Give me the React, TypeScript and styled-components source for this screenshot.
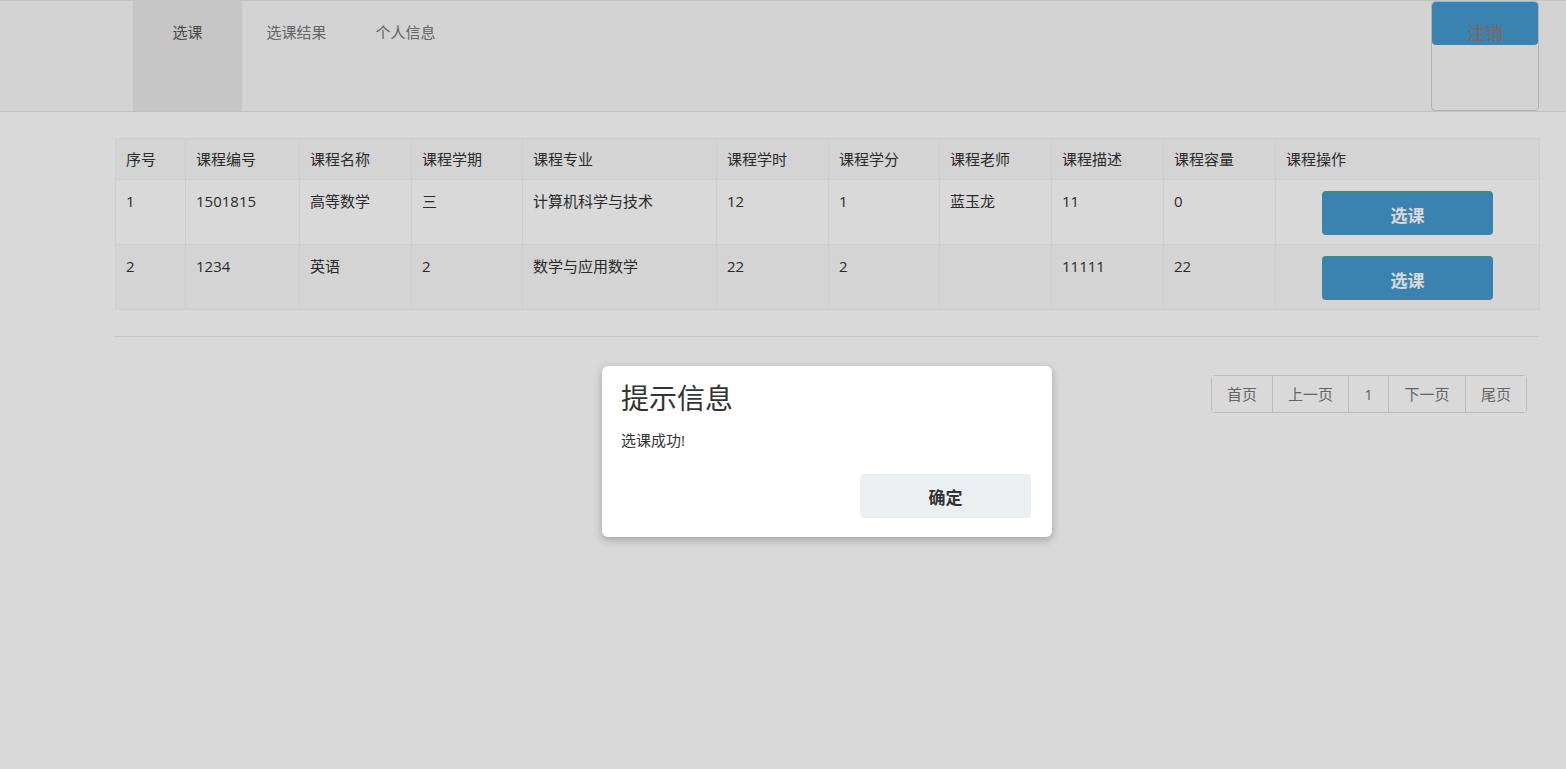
import React from 'react'
import styled, { createGlobalStyle } from 'styled-components'

const GlobalStyle = createGlobalStyle`
  html, body {
    margin: 0;
    padding: 0;
    background: #fff;
    font-family: "Open Sans", "Noto Sans CJK SC", sans-serif;
    font-size: 15px;
    color: #333;
  }
`

const Page = styled.div`
  position: relative;
  width: 1566px;
  height: 769px;
  overflow: hidden;
  background: #fff;
`

const NavBar = styled.div`
  display: flex;
  justify-content: space-between;
  height: 110px;
  padding: 0 27px 0 133px;
  background: #f8f8f8;
  border-top: 1px solid #e7e7e7;
  border-bottom: 1px solid #e4e4e4;
`

const Tabs = styled.div`
  display: flex;
`

const Tab = styled.div<{ $active?: boolean }>`
  width: 109px;
  padding-top: 21px;
  text-align: center;
  font-size: 15px;
  line-height: 20px;
  color: ${(p) => (p.$active ? '#555' : '#777')};
  background: ${(p) => (p.$active ? '#e9e9e9' : 'transparent')};
`

const LogoutBox = styled.div`
  width: 106px;
  height: 108px;
  border: 1px solid #d2d2d2;
  border-radius: 4px;
`

const LogoutButton = styled.div`
  height: 43px;
  box-sizing: border-box;
  padding-top: 20px;
  text-align: center;
  font-size: 18px;
  line-height: 22px;
  color: #8c7a7a;
  background: #459bd0;
  border-radius: 4px;
`

const Content = styled.div`
  padding: 26px 27px 0 115px;
`

const Table = styled.table`
  width: 1424px;
  table-layout: fixed;
  border-collapse: collapse;
  border: 1px solid #f0f0f0;
`

const Row = styled.tr<{ $shade?: boolean }>`
  background: ${(p) => (p.$shade ? '#f9f9f9' : '#fff')};
`

const Th = styled.td`
  padding: 10px 10px;
  line-height: 20px;
  font-size: 15px;
  color: #333;
  border: 1px solid #f2f2f2;
`

const Td = styled.td`
  padding: 11px 10px 9px;
  line-height: 20px;
  font-size: 15px;
  color: #333;
  vertical-align: top;
  border: 1px solid #f2f2f2;
`

const ActionTd = styled(Td)`
  text-align: center;
`

const PickButton = styled.button`
  display: block;
  margin: 0 auto;
  width: 171px;
  height: 44px;
  border: none;
  border-top: 2px solid #4aa29a;
  border-radius: 4px;
  background: #459bd0;
  color: #fff;
  font-family: "Open Sans", "Noto Sans CJK SC", sans-serif;
  font-size: 17px;
  font-weight: bold;
`

const Divider = styled.hr`
  margin: 26px 0 0;
  border: none;
  border-top: 1px solid #e8e8e8;
`

const PagerRow = styled.div`
  display: flex;
  justify-content: flex-end;
  padding: 38px 12px 0 0;
`

const Pager = styled.div`
  display: flex;
  border: 1px solid #ddd;
  border-radius: 4px;
`

const PageItem = styled.div<{ $w: number }>`
  width: ${(p) => p.$w}px;
  height: 36px;
  line-height: 36px;
  text-align: center;
  font-size: 15px;
  color: #777;
  background: #fff;
  & + & {
    border-left: 1px solid #ddd;
  }
`

const Overlay = styled.div`
  position: absolute;
  inset: 0;
  background: rgba(0, 0, 0, 0.15);
`

const Dialog = styled.div`
  position: absolute;
  left: 602px;
  top: 366px;
  width: 450px;
  height: 171px;
  box-sizing: border-box;
  padding: 12px 21px 19px 19px;
  background: #fff;
  border-radius: 6px;
  box-shadow: 0 3px 8px rgba(0, 0, 0, 0.25);
  display: flex;
  flex-direction: column;
`

const DialogTitle = styled.div`
  font-size: 28px;
  line-height: 40px;
  color: #333;
`

const DialogText = styled.div`
  margin-top: 12px;
  font-size: 15px;
  line-height: 20px;
  color: #333;
`

const DialogFooter = styled.div`
  margin-top: auto;
  display: flex;
  justify-content: flex-end;
`

const OkButton = styled.button`
  width: 171px;
  height: 44px;
  border: none;
  border-radius: 4px;
  background: #eceff1;
  color: #333;
  font-family: "Open Sans", "Noto Sans CJK SC", sans-serif;
  font-size: 17px;
  font-weight: bold;
`

const widths = [70, 114, 112, 111, 194, 112, 111, 112, 112, 112, 264]
const headers = ['序号', '课程编号', '课程名称', '课程学期', '课程专业', '课程学时', '课程学分', '课程老师', '课程描述', '课程容量', '课程操作']
const courses = [
  ['1', '1501815', '高等数学', '三', '计算机科学与技术', '12', '1', '蓝玉龙', '11', '0'],
  ['2', '1234', '英语', '2', '数学与应用数学', '22', '2', '', '11111', '22']
]
const pages = [
  { label: '首页', w: 60 },
  { label: '上一页', w: 75 },
  { label: '1', w: 39 },
  { label: '下一页', w: 76 },
  { label: '尾页', w: 60 }
]

export default function App() {
  return (
    <Page>
      <GlobalStyle />
      <NavBar>
        <Tabs>
          <Tab $active>选课</Tab>
          <Tab>选课结果</Tab>
          <Tab>个人信息</Tab>
        </Tabs>
        <LogoutBox>
          <LogoutButton>注销</LogoutButton>
        </LogoutBox>
      </NavBar>
      <Content>
        <Table>
          <colgroup>
            {widths.map((w, i) => (
              <col key={i} style={{ width: w }} />
            ))}
          </colgroup>
          <tbody>
            <Row $shade>
              {headers.map((h) => (
                <Th key={h}>{h}</Th>
              ))}
            </Row>
            {courses.map((c, i) => (
              <Row key={c[0]} $shade={i % 2 === 1}>
                {c.map((v, j) => (
                  <Td key={j}>{v}</Td>
                ))}
                <ActionTd>
                  <PickButton>选课</PickButton>
                </ActionTd>
              </Row>
            ))}
          </tbody>
        </Table>
        <Divider />
        <PagerRow>
          <Pager>
            {pages.map((p) => (
              <PageItem key={p.label} $w={p.w}>
                {p.label}
              </PageItem>
            ))}
          </Pager>
        </PagerRow>
      </Content>
      <Overlay />
      <Dialog>
        <DialogTitle>提示信息</DialogTitle>
        <DialogText>选课成功!</DialogText>
        <DialogFooter>
          <OkButton>确定</OkButton>
        </DialogFooter>
      </Dialog>
    </Page>
  )
}
